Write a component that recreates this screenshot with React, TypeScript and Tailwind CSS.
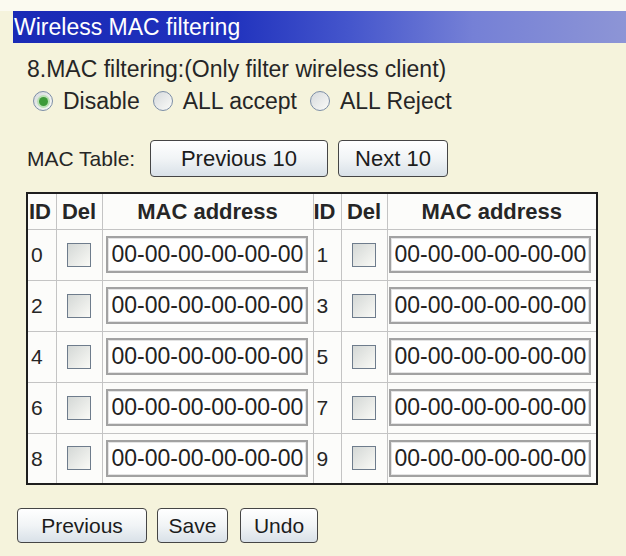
import { useState } from 'react';

const rows = [
  [0, 1],
  [2, 3],
  [4, 5],
  [6, 7],
  [8, 9],
];

function Radio({ checked }: { checked?: boolean }) {
  return (
    <span className="flex h-[20px] w-[20px] shrink-0 items-center justify-center rounded-full border border-[#7c8ea6] bg-gradient-to-br from-[#d6dadd] to-[#fbfbf8]">
      {checked && <span className="h-[9px] w-[9px] rounded-full bg-[#3d9a3a] shadow-[0_0_0_2px_#b9e0b4]" />}
    </span>
  );
}

function Btn({ label, className }: { label: string; className: string }) {
  return (
    <button
      className={
        'rounded-[4px] border border-[#454545] bg-gradient-to-b from-[#ffffff] via-[#f1f4f6] to-[#d9e1e8] leading-none text-[#1c1c1c] ' +
        className
      }
    >
      {label}
    </button>
  );
}

function Check() {
  return (
    <span className="mx-auto block h-[24px] w-[24px] border border-[#6e7c8c] bg-gradient-to-br from-[#d4d8d6] to-[#fafaf6]" />
  );
}

function MacInput() {
  return (
    <input
      readOnly
      value="00-00-00-00-00-00"
      className="block h-[37px] w-[202px] border-2 border-[#a2a2a2] bg-white pl-[4px] text-[23px] text-[#222] shadow-[inset_0_0_0_1px_#e4e4e4] outline-none"
    />
  );
}

export default function App() {
  const [mode, setMode] = useState('disable');

  return (
    <div className="h-[556px] w-[626px] bg-[#f5f3dc] font-['Liberation_Sans',Arial,sans-serif] text-[#262626]">
      <div className="h-[11px] bg-[#fbfaf0]" />
      <div className="ml-[13px] flex h-[32px] items-center bg-[linear-gradient(to_right,#1a2ab6_0%,#1f31bd_35%,#4556cc_55%,#7580d6_75%,#8d95d6_100%)] pl-[1px] text-[23px] text-white">
        Wireless MAC filtering
      </div>

      <div className="pl-[27px]">
        <div className="mt-[12px] h-[28px] text-[23px] leading-[28px]">
          8.MAC filtering:(Only filter wireless client)
        </div>

        <div className="mt-[4px] flex h-[28px] items-center pl-[6px] text-[23px] leading-[28px]">
          {[
            ['disable', 'Disable'],
            ['accept', 'ALL accept'],
            ['reject', 'ALL Reject'],
          ].map(([key, label]) => (
            <label
              key={key}
              onClick={() => setMode(key)}
              className="mr-[13px] flex items-center gap-[10px]"
            >
              <Radio checked={mode === key} />
              {label}
            </label>
          ))}
        </div>

        <div className="mt-[25px] flex h-[37px] items-center text-[21px]">
          <span className="w-[123px]">MAC Table:</span>
          <Btn label="Previous 10" className="h-[37px] w-[178px] text-[22px]" />
          <Btn label="Next 10" className="ml-[10px] h-[37px] w-[110px] text-[22px]" />
        </div>
      </div>

      <table className="ml-[26px] mt-[15px] w-[570px] table-fixed border-collapse border-2 border-[#1e1e1e] bg-[#fcfcfa]">
        <colgroup>
          <col className="w-[29px]" />
          <col className="w-[46px]" />
          <col className="w-[211px]" />
          <col className="w-[28px]" />
          <col className="w-[46px]" />
          <col className="w-[210px]" />
        </colgroup>
        <thead>
          <tr className="h-[36px] text-[22px] font-bold">
            <th className="border border-[#c4c4c4] border-l-[#1e1e1e] pl-[1px] text-left">ID</th>
            <th className="border border-[#c4c4c4]">Del</th>
            <th className="border border-[#c4c4c4]">MAC address</th>
            <th className="border border-[#c4c4c4] text-left">ID</th>
            <th className="border border-[#c4c4c4]">Del</th>
            <th className="border border-[#c4c4c4] border-r-[#1e1e1e]">MAC address</th>
          </tr>
        </thead>
        <tbody>
          {rows.map(([a, b]) => (
            <tr key={a} className="h-[51px] text-[21px]">
              <td className="border border-[#c4c4c4] border-l-[#1e1e1e] pl-[3px]">{a}</td>
              <td className="border border-[#c4c4c4]">
                <Check />
              </td>
              <td className="border border-[#c4c4c4] pl-[3px]">
                <MacInput />
              </td>
              <td className="border border-[#c4c4c4] pl-[3px]">{b}</td>
              <td className="border border-[#c4c4c4]">
                <Check />
              </td>
              <td className="border border-[#c4c4c4] border-r-[#1e1e1e] pl-[1px]">
                <MacInput />
              </td>
            </tr>
          ))}
        </tbody>
      </table>

      <div className="ml-[17px] mt-[23px] flex gap-[10px]">
        <Btn label="Previous" className="h-[35px] w-[130px] text-[21px]" />
        <Btn label="Save" className="h-[35px] w-[71px] text-[21px]" />
        <Btn label="Undo" className="ml-[2px] h-[35px] w-[78px] text-[21px]" />
      </div>
    </div>
  );
}
